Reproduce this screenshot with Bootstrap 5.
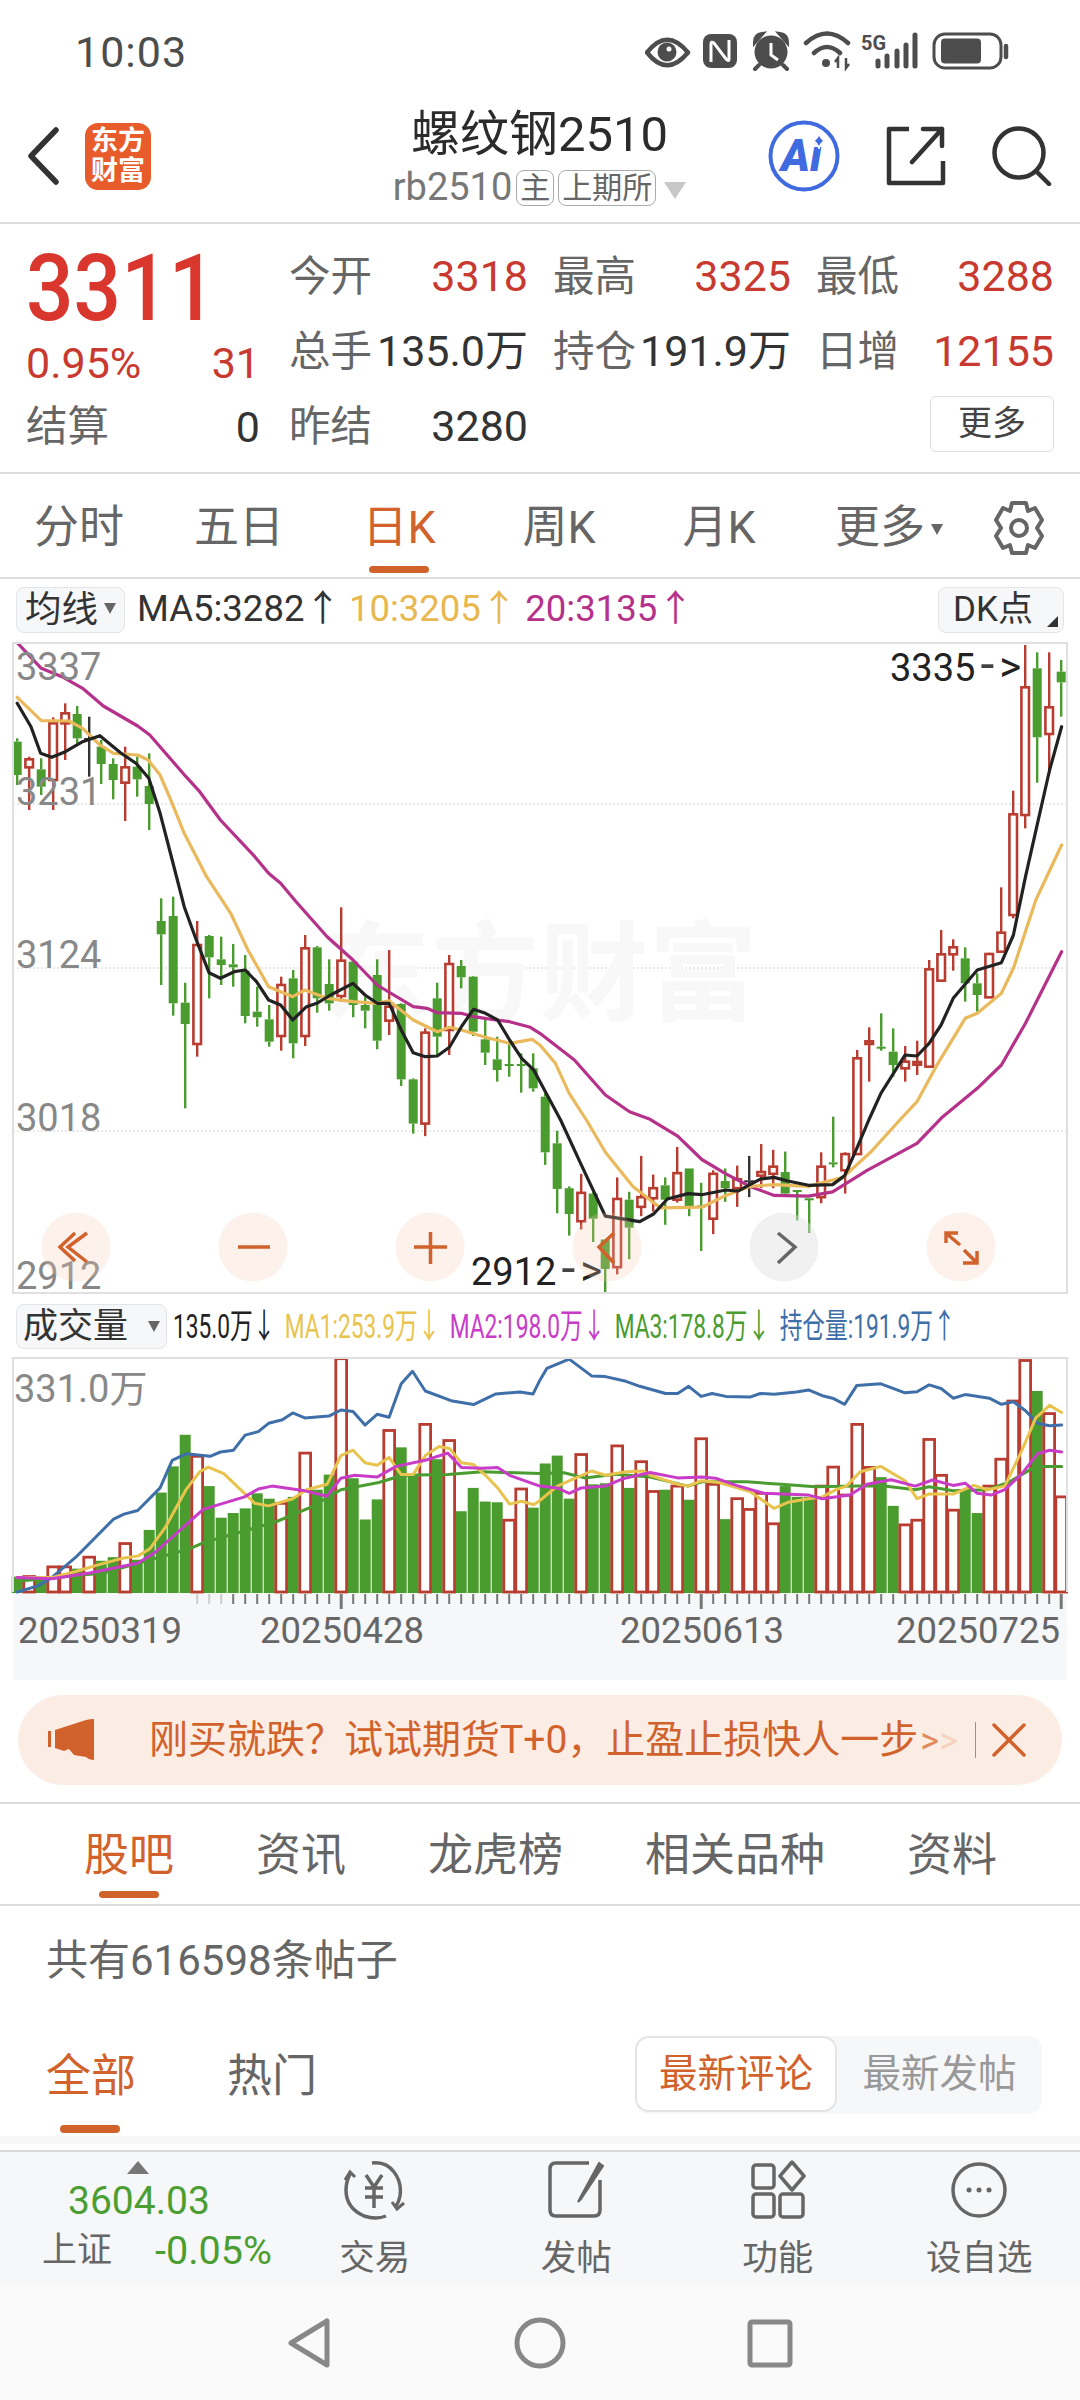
<!DOCTYPE html>
<html lang="zh">
<head>
<meta charset="UTF-8">
<meta name="viewport" content="width=device-width, initial-scale=1.0">
<title>螺纹钢2510</title>
<link href="https://cdn.jsdelivr.net/npm/bootstrap@5.3.0/dist/css/bootstrap.min.css" rel="stylesheet">
<style>
body { width: 1080px; height: 2400px; overflow: hidden; background: #fff; font-family: Roboto, "Noto Sans CJK SC", sans-serif; color: #333; }
.status-row { height: 90px; padding: 14px 70px 0 75px; color: #4d4d4d; }
.status-time { font-size: 43px; letter-spacing: 1px; }
.top-row { height: 134px; padding: 0 28px 0 27px; border-bottom: 2px solid #ddd; }
.top-side { flex: 1 1 0; }
.app-logo { width: 66px; height: 67px; border-radius: 13px; background: #e85c2b; color: #fff; font-size: 27px; line-height: 30px; font-weight: 700; text-align: center; padding-top: 3px; margin-left: 26px; }
.top-title { font-size: 49px; line-height: 56px; color: #2b2b2b; }
.top-sub { font-size: 38px; line-height: 38px; color: #777; margin-top: 5px; white-space: nowrap; }
.tag-box { display: inline-block; border: 1.5px solid #aaa; border-radius: 8px; font-size: 30px; line-height: 34px; padding: 0 3px; color: #666; margin-left: 4px; vertical-align: 2px; }
.tag-arrow { display: inline-block; border-left: 11px solid transparent; border-right: 11px solid transparent; border-top: 17px solid #c8c8c8; margin-left: 8px; vertical-align: 1px; }
.quote-wrap { height: 250px; padding: 15px 24px 0 26px; border-bottom: 2px solid #ddd; }
.quote-left { width: 234px; margin-right: 29px; flex: none; }
.price-big { font-size: 92px; line-height: 98px; height: 98px; font-weight: 500; color: #d9362d; padding-top: 1px; transform: scaleX(.91); transform-origin: left center; }
.cell-row { height: 52px; line-height: 52px; font-size: 43px; }
.cell-row-b { height: 76px; line-height: 76px; font-size: 43px; }
.quote-grid { display: grid; grid-template-columns: 239px 238px 238px; column-gap: 25px; grid-auto-rows: 75px; flex: 1; }
.quote-cell { font-size: 43px; line-height: 75px; white-space: nowrap; }
.lbl { color: #666; font-size: 41.5px; }
.val-red { color: #c8392f; }
.val-dark { color: #333; }
.more-box { width: 124px; height: 56px; border: 1.5px solid #ddd; border-radius: 6px; font-size: 34px; line-height: 52px; text-align: center; color: #444; margin-top: 7px; }
.period-tabs { display: grid; grid-template-columns: repeat(6, 160px) 120px; height: 105px; margin-left: -1px; border-bottom: 2px solid #ddd; width: 1081px; }
.period-item { font-size: 45px; line-height: 107px; text-align: center; color: #666; position: relative; white-space: nowrap; }
.period-item.is-on { color: #d2622c; }
.period-item.is-on::after { content: ""; position: absolute; left: 50px; bottom: 8px; width: 60px; height: 7px; border-radius: 4px; background: #d2622c; }
.period-more { padding-left: 20px; }
.mini-arrow { display: inline-block; border-left: 6px solid transparent; border-right: 6px solid transparent; border-top: 11px solid #666; margin-left: 6px; vertical-align: 8px; }
.legend-row { height: 63px; padding: 8px 16px 0; font-size: 36.5px; line-height: 44px; }
.select-box { height: 46px; border: 1.5px solid #e2e4e8; border-radius: 8px; background: #f6f7f9; color: #333; padding: 0 8px; white-space: nowrap; flex: none; }
.legend-texts { margin-left: 12px; gap: 8px; white-space: nowrap; }
.dk-box { position: relative; width: 126px; font-size: 35px; text-align: left; padding-left: 14px; }
.dk-box::after { content: ""; position: absolute; right: 5px; bottom: 5px; border-left: 11px solid transparent; border-bottom: 11px solid #333; }
.vol-row { height: 63px; padding: 10px 16px 0; font-size: 34px; line-height: 44px; }
.vol-select { width: 151px; height: 45px; font-size: 35px; line-height: 42px; padding: 0 6px; display: flex; align-items: center; justify-content: space-between; }
.vol-texts { margin-left: 6px; transform: scaleX(.668); transform-origin: left center; white-space: nowrap; gap: 14px; }
svg { display: block; }
.promo-bar { height: 90px; margin: 15px 18px 17px; border-radius: 45px; background: #fcede4; padding: 0 36px 0 30px; color: #d2622c; }
.promo-text { font-size: 39px; margin-left: 55px; white-space: nowrap; }
.promo-fade { color: #e08a5e; margin-left: 2px; font-size: 36px; }
.promo-fade2 { color: #f5d3bf; font-size: 36px; }
.promo-sep { width: 1.5px; height: 36px; background: #a88; margin-left: auto; margin-right: 16px; }
.info-tabs { height: 104px; padding-left: 84px; gap: 82px; border-top: 2px solid #ddd; border-bottom: 2px solid #ddd; }
.info-item { font-size: 45px; line-height: 104px; color: #666; position: relative; white-space: nowrap; }
.info-item.is-on { color: #d2622c; }
.info-item.is-on::after { content: ""; position: absolute; left: 15px; bottom: 6px; width: 60px; height: 7px; border-radius: 4px; background: #d2622c; }
.post-count { height: 110px; padding-left: 46px; font-size: 42px; line-height: 110px; color: #666; }
.post-tabs { height: 128px; padding: 20px 38px 0 46px; }
.post-tab { font-size: 45px; line-height: 82px; height: 78px; color: #666; position: relative; margin-right: 91px; }
.post-tab.is-on { color: #d2622c; }
.post-tab.is-on::after { content: ""; position: absolute; left: 14px; top: 89px; width: 60px; height: 8px; border-radius: 4px; background: #d2622c; }
.seg-box { margin-left: auto; width: 407px; height: 78px; background: #f6f7f9; border-radius: 14px; font-size: 38.5px; color: #999; }
.seg-on { width: 202px; height: 76px; line-height: 72px; text-align: center; background: #fff; border: 2px solid #e4e4e4; border-radius: 14px; color: #d2622c; }
.seg-off { flex: 1; line-height: 76px; text-align: center; }
.bottom-band { height: 8px; background: #f7f7f7; margin-top: -8px; }
.bottom-bar { height: 136px; margin-top: 6px; background: #f6f7f9; border-top: 2px solid #d8d8d8; }
.index-box { width: 274px; flex: none; position: relative; padding: 24px 0 0 42px; }
.index-box::before { content: ""; position: absolute; left: 127px; top: 9px; border-left: 11px solid transparent; border-right: 11px solid transparent; border-bottom: 13px solid #777; }
.index-num { font-size: 39px; line-height: 50px; color: #4b9e31; padding-left: 26px; }
.index-line { font-size: 35px; line-height: 50px; color: #666; gap: 43px; white-space: nowrap; }
.index-pct { color: #4b9e31; font-size: 39.5px; }
.tool-item { width: 201.5px; flex: none; text-align: center; color: #666; font-size: 35.5px; line-height: 40px; padding-top: 8px; }
.tool-item svg { margin: 0 auto 18px; }
.nav-row { height: 114px; background: #fafafa; }
</style>
</head>
<body>

<!-- status bar -->
<div class="status-row d-flex align-items-center justify-content-between">
  <span class="status-time">10:03</span>
  <svg width="365" height="44" viewBox="645 30 365 44" fill="none">
    <path d="M647 52.5Q667 27 688 52.5Q667 78 647 52.5Z" stroke="#4d4d4d" stroke-width="4.5" stroke-linejoin="round"/>
    <circle cx="667" cy="52" r="9.5" fill="#4d4d4d"/><circle cx="669" cy="49" r="2.5" fill="#fff"/>
    <rect x="703" y="34" width="34" height="34" rx="8" fill="#4d4d4d"/>
    <path d="M711 62V44Q711 41 714 43L726 59Q729 62 729 59V40" stroke="#fff" stroke-width="3"/>
    <circle cx="771" cy="52" r="16.5" fill="#4d4d4d"/>
    <path d="M771 43V55L778 60" stroke="#fff" stroke-width="3"/>
    <path d="M755 42Q755 35 762 34ZM787 42Q787 35 780 34ZM759 65L755 69M783 65L787 69" stroke="#4d4d4d" stroke-width="4" stroke-linecap="round"/>
    <path d="M806 43Q827 24 848 43M814 53Q827 41 840 53" stroke="#4d4d4d" stroke-width="4.5" stroke-linecap="round"/>
    <circle cx="826" cy="63" r="4" fill="#4d4d4d"/>
    <path d="M838 58V68M846 58V68M835 62L838 58L838 66M849 64L846 68L846 60" stroke="#4d4d4d" stroke-width="2.5"/>
    <text x="861" y="50" font-family="Roboto" font-size="20" font-weight="700" fill="#4d4d4d" textLength="25" lengthAdjust="spacingAndGlyphs">5G</text>
    <path d="M878 61V66M887 56V66M897 51V66M906 45V66M915 35V66" stroke="#4d4d4d" stroke-width="5" stroke-linecap="round"/>
    <rect x="934" y="34" width="67" height="34" rx="11" stroke="#4d4d4d" stroke-width="3"/>
    <rect x="941" y="38.5" width="40" height="25" rx="4" fill="#4d4d4d"/>
    <path d="M1006 46V57" stroke="#4d4d4d" stroke-width="4.5" stroke-linecap="round"/>
  </svg>
</div>

<!-- title bar -->
<div class="top-row d-flex align-items-center">
  <div class="top-side d-flex align-items-center">
    <svg width="32" height="58" viewBox="0 0 32 58" fill="none"><path d="M29 3L4 29L29 55" stroke="#333" stroke-width="5.5" stroke-linecap="round" stroke-linejoin="round"/></svg>
    <div class="app-logo">东方<br>财富</div>
  </div>
  <div class="text-center">
    <div class="top-title">螺纹钢2510</div>
    <div class="top-sub">rb2510<span class="tag-box">主</span><span class="tag-box">上期所</span><span class="tag-arrow"></span></div>
  </div>
  <div class="top-side d-flex align-items-center justify-content-end">
    <svg width="72" height="74" viewBox="0 0 72 74" fill="none">
      <circle cx="36" cy="37" r="33.5" stroke="#3f6ae0" stroke-width="4"/>
      <text x="13" y="52" font-family="Roboto" font-size="44" font-weight="900" font-style="italic" fill="#3f6ae0">Ai</text>
      <path d="M51 14Q52 20 57 22Q52 24 51 30Q50 24 45 22Q50 20 51 14Z" fill="#3f6ae0" stroke="#fff" stroke-width="1.5"/>
    </svg>
    <svg width="60" height="60" viewBox="0 0 60 60" fill="none" stroke="#333" stroke-width="4.5" stroke-linejoin="round" style="margin-left:46px">
      <path d="M23 3H3V57H57V35"/>
      <path d="M56 3H37M56 3L26 36M56 3V20" stroke-linecap="round"/>
    </svg>
    <svg style="margin-left:46px" width="60" height="60" viewBox="0 0 60 60" fill="none" stroke="#333" stroke-width="4.5" stroke-linecap="round">
      <circle cx="27" cy="27" r="24.5"/><path d="M45 46L57 58"/>
    </svg>
  </div>
</div>

<!-- quote block -->
<div class="quote-wrap d-flex">
  <div class="quote-left">
    <div class="price-big">3311</div>
    <div class="cell-row d-flex justify-content-between val-red"><span>0.95%</span><span>31</span></div>
    <div class="cell-row-b d-flex justify-content-between"><span class="lbl">结算</span><span class="val-dark">0</span></div>
  </div>
  <div class="quote-grid">
    <div class="quote-cell d-flex justify-content-between"><span class="lbl">今开</span><span class="val-red">3318</span></div>
    <div class="quote-cell d-flex justify-content-between"><span class="lbl">最高</span><span class="val-red">3325</span></div>
    <div class="quote-cell d-flex justify-content-between"><span class="lbl">最低</span><span class="val-red">3288</span></div>
    <div class="quote-cell d-flex justify-content-between"><span class="lbl">总手</span><span class="val-dark">135.0万</span></div>
    <div class="quote-cell d-flex justify-content-between"><span class="lbl">持仓</span><span class="val-dark">191.9万</span></div>
    <div class="quote-cell d-flex justify-content-between"><span class="lbl">日增</span><span class="val-red">12155</span></div>
    <div class="quote-cell d-flex justify-content-between"><span class="lbl">昨结</span><span class="val-dark">3280</span></div>
    <div></div>
    <div class="d-flex justify-content-end"><div class="more-box">更多</div></div>
  </div>
</div>

<!-- period tabs -->
<div class="period-tabs">
  <div class="period-item">分时</div>
  <div class="period-item">五日</div>
  <div class="period-item is-on">日K</div>
  <div class="period-item">周K</div>
  <div class="period-item">月K</div>
  <div class="period-item period-more">更多<span class="mini-arrow"></span></div>
  <div class="d-flex align-items-center justify-content-center">
    <svg width="54" height="56" viewBox="0 0 54 56" fill="none" stroke="#666" stroke-width="4" stroke-linejoin="round">
      <path d="M20 3H34L36 11L43 8L50 20L45 28L50 36L43 48L36 45L34 53H20L18 45L11 48L4 36L9 28L4 20L11 8L18 11Z"/>
      <circle cx="27" cy="28" r="8"/>
    </svg>
  </div>
</div>

<!-- ma legend -->
<div class="legend-row d-flex">
  <div class="select-box">均线<span class="mini-arrow"></span></div>
  <div class="legend-texts d-flex">
    <span style="color:#333">MA5:3282↑</span>
    <span style="color:#e8b84e">10:3205↑</span>
    <span style="color:#b5318a">20:3135↑</span>
  </div>
  <div class="select-box dk-box ms-auto">DK点</div>
</div>

<svg id="klineChart" width="1080" height="652" viewBox="0 642 1080 652"></svg>

<!-- volume legend -->
<div class="vol-row d-flex">
  <div class="select-box vol-select"><span>成交量</span><span class="mini-arrow m-0"></span></div>
  <div class="vol-texts d-flex">
    <span style="color:#222">135.0万↓</span>
    <span style="color:#e8c44e">MA1:253.9万↓</span>
    <span style="color:#c83cc8">MA2:198.0万↓</span>
    <span style="color:#4a9c30">MA3:178.8万↓</span>
    <span style="color:#3f6fa8">持仓量:191.9万↑</span>
  </div>
</div>

<svg id="volChart" width="1080" height="323" viewBox="0 1357 1080 323"></svg>

<!-- promo -->
<div class="promo-bar d-flex align-items-center">
  <svg width="46" height="42" viewBox="0 0 46 42"><path d="M0 12H3V28H0ZM7 11L38 1Q42 0 46 0V41Q41 41 38 38L26 36L21 30L16 32L7 29Z" fill="#d2622c"/></svg>
  <span class="promo-text">刚买就跌？试试期货T+0，止盈止损快人一步<span class="promo-fade">&gt;</span><span class="promo-fade2">&gt;</span></span>
  <span class="promo-sep"></span>
  <svg width="34" height="34" viewBox="0 0 34 34" stroke="#d2622c" stroke-width="3.5" stroke-linecap="round"><path d="M2 2L32 32M32 2L2 32"/></svg>
</div>

<!-- info tabs -->
<div class="info-tabs d-flex">
  <div class="info-item is-on">股吧</div>
  <div class="info-item">资讯</div>
  <div class="info-item">龙虎榜</div>
  <div class="info-item">相关品种</div>
  <div class="info-item">资料</div>
</div>

<div class="post-count">共有616598条帖子</div>

<div class="post-tabs d-flex">
  <div class="post-tab is-on">全部</div>
  <div class="post-tab">热门</div>
  <div class="seg-box d-flex">
    <div class="seg-on">最新评论</div>
    <div class="seg-off">最新发帖</div>
  </div>
</div>
<div class="bottom-band"></div>

<!-- bottom bar -->
<div class="bottom-bar d-flex">
  <div class="index-box">
    <div class="index-num">3604.03</div>
    <div class="index-line d-flex"><span>上证</span><span class="index-pct">-0.05%</span></div>
  </div>
  <div class="tool-item">
    <svg width="66" height="60" viewBox="0 0 66 60" fill="none" stroke="#666" stroke-width="3.5">
      <path d="M8 14Q4 22 4 30Q4 48 22 56Q34 60 44 56M30 3Q44 1 52 12Q60 22 58 36Q57 42 54 46"/>
      <path d="M3 20L8 12L13 17M50 42L55 49L62 43" stroke-width="3"/>
      <path d="M24 15L32 27L40 15M23 28H41M23 37H41M32 27V48" stroke-width="3.5"/>
    </svg>
    <div>交易</div>
  </div>
  <div class="tool-item">
    <svg width="58" height="60" viewBox="0 0 58 60" fill="none" stroke="#666" stroke-width="3.5">
      <path d="M42 3H9Q3 3 3 9V50Q3 56 9 56H47Q53 56 53 50V20"/>
      <path d="M52 3L33 38L31 42L34 39L56 6Z" fill="#666" stroke-width="2"/>
    </svg>
    <div>发帖</div>
  </div>
  <div class="tool-item">
    <svg width="56" height="60" viewBox="0 0 56 60" fill="none" stroke="#666" stroke-width="3.5">
      <rect x="3" y="5" width="21" height="23" rx="3"/><path d="M42 2L54 16L42 30L30 16Z" stroke-linejoin="round"/>
      <rect x="3" y="34" width="21" height="23" rx="3"/><rect x="30" y="34" width="23" height="23" rx="3"/>
    </svg>
    <div>功能</div>
  </div>
  <div class="tool-item">
    <svg width="58" height="60" viewBox="0 0 58 60" fill="none" stroke="#666" stroke-width="3.5">
      <circle cx="29" cy="30" r="26"/><circle cx="19" cy="30" r="2.5" fill="#666" stroke="none"/><circle cx="29" cy="30" r="2.5" fill="#666" stroke="none"/><circle cx="39" cy="30" r="2.5" fill="#666" stroke="none"/>
    </svg>
    <div>设自选</div>
  </div>
</div>

<!-- system nav -->
<svg class="nav-row" width="1080" height="114" viewBox="0 2286 1080 114" fill="none" stroke="#888" stroke-width="5" stroke-linejoin="round">
  <path d="M327 2321V2365L291 2343Z"/>
  <circle cx="540" cy="2343" r="23"/>
  <rect x="750" y="2322" width="40" height="43" rx="2"/>
</svg>

<script>
const NS = "http://www.w3.org/2000/svg";
const RED = "#b83c30", GREEN = "#4a9c2e";

// zoom crop coords to page coords (lower crops have a different y scale)
const zx = x => x / 2.904;
const vY = y => 1120 + y / 2.786;
const kY = y => y <= 1500 ? 620 + y / 3 : vY(y - 1500);

function add(svg, tag, attrs, text) {
  const el = document.createElementNS(NS, tag);
  for (const k in attrs) el.setAttribute(k, attrs[k]);
  if (text) el.textContent = text;
  svg.appendChild(el);
  return el;
}

// type, high, top, bottom, low
const candles = [
  ["g",355,365,465,495],["r",410,418,442,570],["g",415,448,500,525],["r",292,310,480,570],
  ["r",250,280,310,420],["g",258,282,355,370],["k",290,354,357,470],["g",360,380,432,492],
  ["g",415,432,480,538],["r",380,442,488,603],["g",410,440,478,530],["g",400,498,552,630],
  ["g",835,903,943,1095],["g",830,888,1150,1187],["g",1088,1148,1212,1465],["r",903,975,1272,1310],
  ["g",945,948,1012,1135],["g",950,1018,1035,1095],["g",972,1033,1042,1100],["g",1005,1052,1188,1210],
  ["g",1100,1175,1192,1220],["g",1155,1198,1265,1280],["r",1070,1095,1248,1292],["g",1050,1075,1270,1315],
  ["r",945,985,1248,1278],["g",978,982,1135,1178],["g",1018,1092,1150,1172],["r",862,1022,1128,1145],
  ["g",1020,1025,1155,1192],["g",1130,1155,1172,1225],["g",1018,1065,1262,1288],["r",990,1160,1202,1245],
  ["g",1150,1152,1378,1398],["g",1375,1378,1510,1538],["r",1225,1238,1510,1545],["g",1088,1135,1250,1305],
  ["r",1005,1032,1230,1305],["g",1020,1038,1072,1105],["g",1068,1070,1235,1248],["g",1200,1258,1298,1335],
  ["g",1250,1318,1350,1385],["g",1265,1332,1335,1370],["g",1300,1332,1335,1418],["g",1300,1345,1405,1415],
  ["g",1420,1430,1590,1625],["g",1530,1565,1692,1760],["g",1685,1690,1762,1822],["r",1650,1703,1782,1805],
  ["g",1700,1705,1775,1840],["g",1832,1833,1915,1985],["r",1660,1720,1910,1930],["g",1700,1722,1800,1888],
  ["r",1600,1715,1742,1768],["r",1652,1690,1718,1755],["g",1660,1682,1722,1792],["r",1575,1648,1722,1730],
  ["g",1635,1635,1740,1768],["g",1675,1738,1742,1865],["r",1640,1650,1775,1818],["g",1635,1670,1690,1728],
  ["r",1627,1665,1690,1742],["k",1600,1668,1671,1715],["r",1567,1645,1655,1690],["r",1583,1630,1650,1690],
  ["g",1588,1645,1705,1708],["g",1695,1695,1698,1780],["g",1718,1718,1722,1815],["r",1590,1630,1715,1732],
  ["g",1490,1618,1622,1632],["r",1590,1595,1640,1705],["r",1290,1315,1595,1595],["r",1222,1264,1272,1385],
  ["g",1180,1280,1284,1292],["g",1225,1295,1335,1370],["r",1278,1325,1345,1385],["r",1262,1326,1334,1365],
  ["r",1020,1048,1340,1340],["r",930,1003,1082,1082],["r",958,982,1003,1052],["g",982,1015,1090,1145],
  ["g",1060,1090,1125,1175],["r",998,1002,1132,1132],["r",802,938,995,995],["r",512,583,885,895],
  ["r",75,202,585,625],["g",97,145,352,488],["r",97,262,342,460],["g",120,155,187,290]
];

const ma5 = [[50,250],[90,320],[118,400],[150,412],[190,395],[240,365],[290,347],[350,398],[395,430],[432,475],[465,580],[500,720],[535,860],[570,960],[607,1058],[640,1075],[680,1055],[712,1050],[745,1085],[780,1140],[815,1155],[850,1200],[890,1160],[920,1150],[960,1125],[1025,1090],[1060,1125],[1095,1150],[1130,1150],[1165,1230],[1200,1298],[1235,1310],[1270,1308],[1305,1282],[1340,1220],[1375,1168],[1410,1180],[1445,1200],[1480,1260],[1515,1315],[1550,1350],
  [1628,1500],[1688,1625],[1758,1768],[1858,1783],[1898,1762],[1938,1720],[1998,1705],[2038,1708],[2108,1695],[2143,1698],[2178,1680],[2208,1665],[2248,1660],[2288,1670],[2348,1682],[2418,1680],[2453,1655],[2488,1580],[2523,1500],
  [2558,1420],[2628,1305],[2663,1308],[2698,1270],[2733,1215],[2768,1135],[2838,1050],[2908,1028],[2943,945],[2978,770],[3013,610],[3048,450],[3083,320]];
const ma10 = [[50,232],[120,302],[200,303],[240,325],[290,375],[330,400],[400,405],[430,420],[465,465],[500,550],[535,640],[600,770],[670,880],[720,990],[780,1100],[850,1130],[885,1110],[950,1135],[1025,1145],[1095,1150],[1130,1142],[1200,1200],[1270,1235],[1305,1222],[1340,1230],[1410,1252],[1480,1270],[1545,1258],
  [1568,1275],[1613,1330],[1653,1420],[1703,1500],[1758,1590],[1838,1685],[1918,1745],[2038,1743],[2108,1710],[2178,1685],[2248,1680],[2348,1685],[2448,1660],[2528,1590],[2613,1500],[2663,1445],[2718,1340],[2803,1195],[2838,1180],[2908,1120],[2943,1045],[3008,840],[3083,675]];
const ma20 = [[50,68],[120,145],[180,170],[240,205],[300,258],[400,318],[435,345],[540,470],[580,515],[640,600],[740,710],[780,760],[815,790],[860,845],[950,950],[1025,1020],[1095,1095],[1200,1160],[1240,1165],[1270,1178],[1340,1180],[1375,1190],[1440,1200],[1480,1205],[1540,1222],
  [1568,1240],[1668,1320],[1758,1425],[1828,1475],[1888,1498],[1908,1510],[1968,1545],[2038,1610],[2108,1650],[2178,1685],[2248,1710],[2348,1712],[2418,1700],[2518,1640],[2663,1565],[2738,1490],[2838,1405],[2908,1335],[2978,1210],[3083,995]];

function line(svg, pts, color, width, yFn) {
  add(svg, "polyline", {
    points: pts.map(p => zx(p[0]).toFixed(1) + "," + yFn(p[1]).toFixed(1)).join(" "),
    fill: "none", stroke: color, "stroke-width": width, "stroke-linejoin": "round", "stroke-linecap": "round"
  });
}

// "3335->" style marker, the arrow is drawn wider than the digits
function marker(svg, x, y, num) {
  const t = add(svg, "text", { x: x, y: y, "font-size": 38, fill: "#222" }, num);
  add(t, "tspan", { dx: 5, "font-size": 50, fill: "#444" }, "-");
  add(t, "tspan", { dx: 5, "font-size": 42 }, ">");
}

function drawKline() {
  const svg = document.getElementById("klineChart");
  [804, 968, 1131].forEach(y => add(svg, "line", { x1: 13, x2: 1067, y1: y, y2: y, stroke: "#e2e2e2", "stroke-width": 1.5, "stroke-dasharray": "2 2" }));
  add(svg, "text", { x: 540, y: 1012, "text-anchor": "middle", "font-size": 108, "font-weight": 700, fill: "#f8f8f8", "letter-spacing": 1 }, "东方财富");

  candles.forEach((c, i) => {
    const x = 17.2 + i * 12.0;
    const [t, hi, top, bot, lo] = c;
    const col = t === "r" ? RED : t === "g" ? GREEN : "#333";
    add(svg, "line", { x1: x, x2: x, y1: kY(hi), y2: kY(top), stroke: col, "stroke-width": 2.4 });
    add(svg, "line", { x1: x, x2: x, y1: kY(bot), y2: kY(lo), stroke: col, "stroke-width": 2.4 });
    if (t === "r") add(svg, "rect", { x: x - 3.8, y: kY(top), width: 7.6, height: Math.max(kY(bot) - kY(top), 2), fill: "#fff", stroke: col, "stroke-width": 2.6 });
    else if (t === "g") add(svg, "rect", { x: x - 4.5, y: kY(top), width: 9, height: Math.max(kY(bot) - kY(top), 2), fill: col });
    else add(svg, "rect", { x: x - 5, y: kY(top), width: 10, height: 2, fill: col });
  });

  line(svg, ma20, "#b5318a", 3.2, kY);
  line(svg, ma10, "#eab95c", 3.2, kY);
  line(svg, ma5, "#222", 3.2, kY);

  add(svg, "rect", { x: 13, y: 643, width: 1054, height: 650, fill: "none", stroke: "#e0e0e0", "stroke-width": 2 });

  [["3337", 680], ["3231", 805], ["3124", 968], ["3018", 1131], ["2912", 1289]].forEach(a =>
    add(svg, "text", { x: 16, y: a[1], "font-size": 38, fill: "#888" }, a[0]));
  marker(svg, 890, 681, "3335");
  marker(svg, 471, 1285, "2912");

  // round chart buttons
  const btns = [76, 253, 430, 607, 784, 961];
  btns.forEach((x, i) => add(svg, "circle", { cx: x, cy: 1247, r: 34.5, fill: i === 4 ? "rgba(225,225,225,.45)" : "rgba(242,200,175,.25)" }));
  const icon = (d, c) => add(svg, "path", { d: d, fill: "none", stroke: c, "stroke-width": 3.5 });
  icon("M75 1233L60 1247L75 1261M87 1233L68 1247L87 1262", "#d2622c");
  icon("M238 1247H270", "#d2622c");
  icon("M414 1247H447M430.5 1232V1264", "#d2622c");
  icon("M614 1233L599 1247L614 1263", "#d2622c");
  icon("M778 1233L795 1247L778 1263", "#666");
  icon("M946 1243V1233H958M947 1234L960 1245M977 1251V1263H963M976 1262L964 1250", "#d2622c");
}

const volTops = [1272,1272,1280,1245,1245,1250,1218,1228,1218,1180,1225,1142,1038,965,877,937,1020,1108,1095,1082,1040,1055,1068,1050,928,1030,988,665,998,1113,1057,865,912,990,848,945,893,1090,1025,1063,1065,1115,1028,1080,
  957,935,1055,932,1015,1012,908,1025,952,1035,1030,1020,1058,888,1015,1112,1055,1085,1040,1125,1020,1050,1050,1020,967,1045,848,968,995,1075,1128,1115,890,990,1087,1030,1095,1020,945,783,670,755,818,1050];
const volRed = new Set([1,3,4,6,9,15,22,24,27,31,34,36,41,42,47,50,52,53,55,57,58,60,61,62,63,67,68,69,70,71,74,75,76,77,78,81,82,83,84,86,87]);

const vBlue = [[50,1315],[110,1298],[150,1275],[220,1218],[330,1112],[360,1098],[400,1088],[465,1025],[500,948],[540,930],[610,937],[640,925],[678,920],[712,878],[750,868],[780,845],[820,835],[850,816],[885,830],[955,825],[990,808],[1025,812],[1060,850],[1095,820],[1130,828],[1165,735],[1198,700],[1235,755],[1310,782],[1375,793],[1440,763],[1510,758],[1548,763],
  [1568,725],[1588,692],[1653,666],[1718,713],[1758,715],[1818,728],[1858,742],[1933,762],[1968,762],[2000,742],[2036,770],[2068,762],[2108,770],[2178,772],[2208,762],[2248,764],[2313,758],[2348,752],[2388,768],[2418,775],[2453,792],[2488,740],[2558,735],[2628,760],[2663,757],[2698,738],[2733,748],[2768,775],[2803,765],[2873,775],[2908,792],[2943,785],[2978,810],[3013,845],[3048,852],[3083,850]];
const vYellow = [[50,1275],[150,1275],[220,1258],[290,1238],[360,1220],[400,1215],[435,1195],[480,1135],[540,1030],[580,980],[605,967],[650,985],[710,1040],[740,1068],[780,1075],[850,1055],[890,1030],[950,1015],[990,935],[1025,920],[1060,955],[1095,962],[1130,940],[1165,988],[1200,988],[1235,935],[1275,910],[1305,915],[1340,955],[1375,960],[1410,990],[1445,1025],[1480,1070],[1515,1062],[1550,1072],
  [1568,1060],[1618,1020],[1718,978],[1758,990],[1818,980],[1868,978],[1888,990],[1968,1015],[1998,1020],[2038,1005],[2088,1010],[2178,1035],[2248,1082],[2288,1065],[2348,1055],[2388,1050],[2428,1030],[2458,1020],[2498,980],[2558,965],[2628,1005],[2663,1055],[2698,1042],[2768,1042],[2828,1018],[2868,1030],[2918,1020],[2968,920],[3008,830],[3048,795],[3083,815]];
const vPurple = [[50,1275],[150,1278],[260,1262],[400,1235],[450,1205],[520,1145],[590,1085],[710,1050],[750,1028],[790,1020],[880,1032],[950,1048],[990,998],[1030,990],[1095,995],[1150,965],[1235,948],[1300,928],[1340,968],[1400,970],[1445,968],[1480,990],
  [1568,1020],[1618,1025],[1653,1040],[1688,1025],[1758,1020],[1808,1000],[1888,982],[1968,997],[2038,995],[2078,998],[2138,1018],[2218,1040],[2348,1045],[2388,1055],[2468,1045],[2518,1015],[2588,1002],[2658,1020],[2708,1003],[2768,1018],[2803,1012],[2838,1040],[2878,1045],[2918,1030],[2968,985],[3013,930],[3048,920],[3083,925]];
const vGreen = [[50,1285],[300,1262],[550,1195],[590,1178],[800,1120],[900,1080],[990,1030],[1100,1010],[1170,990],[1300,988],[1400,980],
  [1568,985],[1638,983],[1698,997],[1788,987],[1888,995],[1998,1020],[2038,1008],[2168,1008],[2268,1015],[2368,1022],[2488,1020],[2568,1020],[2658,1030],[2698,1022],[2768,1033],[2868,1030],[2928,1010],[3008,965],[3083,965]];

function drawVolume() {
  const svg = document.getElementById("volChart");
  add(svg, "rect", { x: 13, y: 1592, width: 1054, height: 88, fill: "#f6f7f9" });
  const base = vY(1315);
  volTops.forEach((t, i) => {
    const x = 17.2 + i * 12.0, y = vY(t);
    if (volRed.has(i)) add(svg, "rect", { x: x - 5.4, y: y, width: 10.8, height: base - y, fill: "#fff", stroke: RED, "stroke-width": 2.8 });
    else add(svg, "rect", { x: x - 5.5, y: y, width: 11, height: base - y + 1, fill: GREEN });
  });
  line(svg, vGreen, "#4a9c30", 3, vY);
  line(svg, vBlue, "#3f6fa8", 3, vY);
  line(svg, vYellow, "#e8c44e", 3, vY);
  line(svg, vPurple, "#c83cc8", 3, vY);
  add(svg, "path", { d: "M13 1592V1358H1067V1592", fill: "none", stroke: "#e0e0e0", "stroke-width": 2 });

  // ticks
  for (let i = 15; i < 88; i++) {
    const x = 17.2 + i * 12.0, major = i === 27 || i === 57 || i === 87;
    add(svg, "line", { x1: x, x2: x, y1: 1594, y2: major ? 1609 : 1604, stroke: i < 18 ? "#ccc" : "#777", "stroke-width": major ? 3 : 2 });
  }
  [["20250319", 18], ["20250428", 260], ["20250613", 620], ["20250725", 896]].forEach(a =>
    add(svg, "text", { x: a[1], y: 1643, "font-size": 36.5, fill: "#666" }, a[0]));
  add(svg, "text", { x: 14, y: 1402, "font-size": 38, fill: "#888" }, "331.0万");
}

drawKline();
drawVolume();
</script>
<script src="https://cdn.jsdelivr.net/npm/bootstrap@5.3.0/dist/js/bootstrap.bundle.min.js"></script>
</body>
</html>
